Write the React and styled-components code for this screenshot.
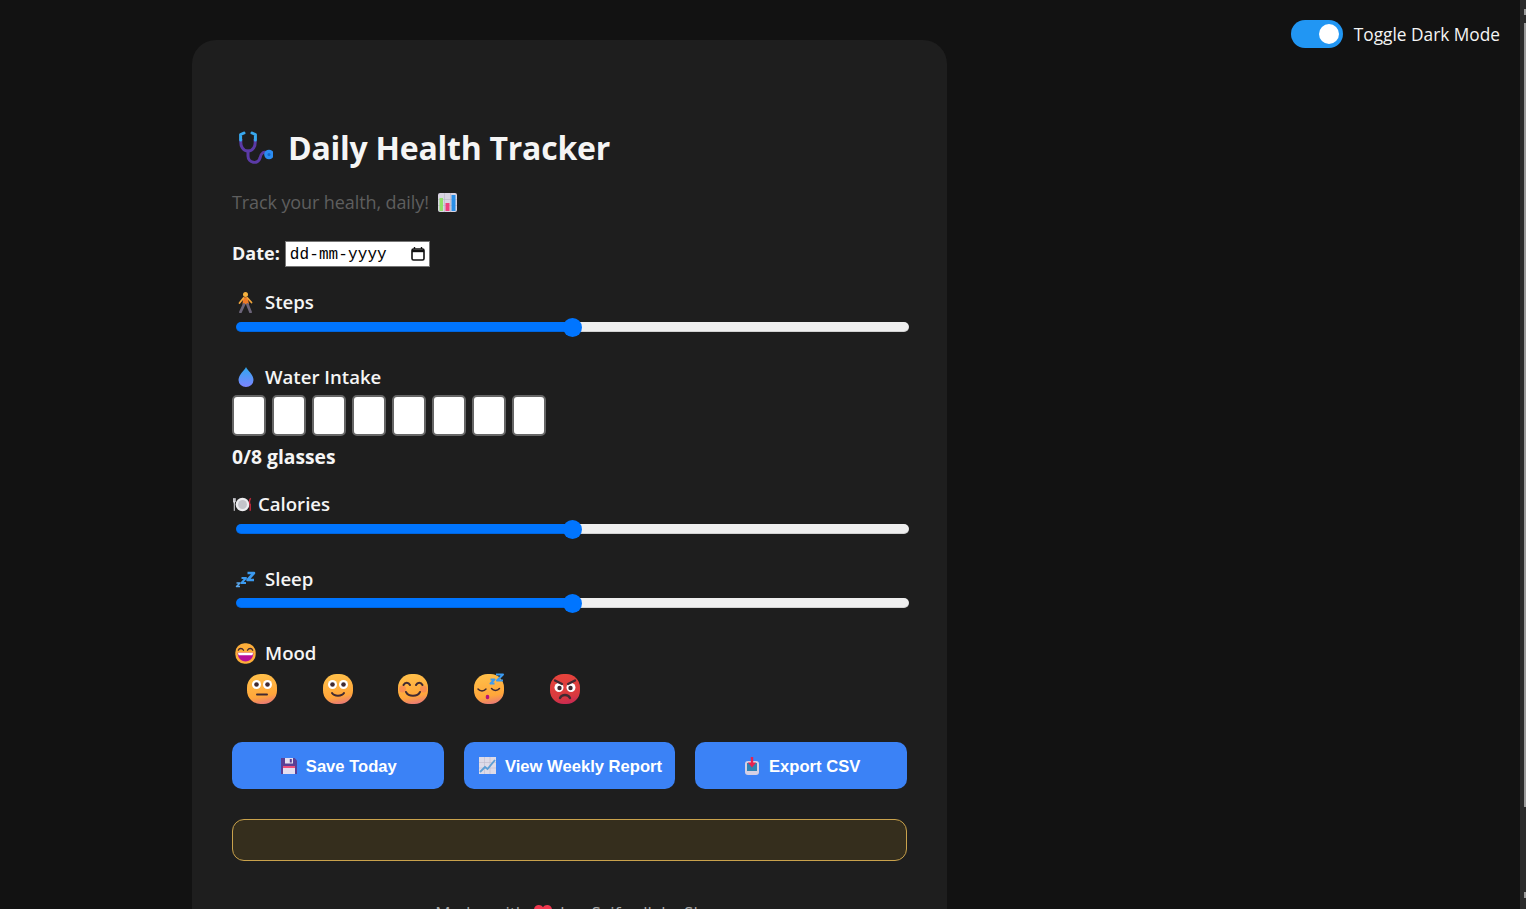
import { useId, useState } from "react";
import styled, { createGlobalStyle } from "styled-components";

const GlobalStyle = createGlobalStyle`
  html, body {
    margin: 0;
    height: 100%;
    overflow: hidden;
    background: #121212;
  }
  * {
    box-sizing: border-box;
  }
`;

const uiFont = `"Open Sans", "Noto Sans", sans-serif`;

// Emoji drawn by hand, the page has no colour emoji font to rely on
function Stethoscope() {
  return (
    <Glyph $w={36} $h={34} viewBox="5 6 36 34" fill="none">
      <path d="M9 15c-1 6 2 11 7 11s8-5 7-11" stroke="#5b3aa6" strokeWidth="3" strokeLinecap="round" />
      <path d="M16 26v5c0 7 10 9 12 2 1-5 4-7 7-5" stroke="#5b3aa6" strokeWidth="3" strokeLinecap="round" />
      <path d="M8.600 15V9.500L12 8M23.400 15V9.500L20 8" stroke="#38a8ee" strokeWidth="3" strokeLinecap="round" strokeLinejoin="round" />
      <circle cx="37" cy="29.500" r="4.800" fill="#2b8cf2" />
      <circle cx="37" cy="29.500" r="1.500" fill="#1566c8" />
    </Glyph>
  );
}

function BarChart() {
  return (
    <Glyph $w={19} $h={19} viewBox="0 0 19 19">
      <rect width="19" height="19" rx="2" fill="#d9d4e2" />
      <path d="M0 6.500h19M0 12.500h19M6.500 0v19M12.500 0v19" stroke="#b9b3c6" strokeWidth=".6" />
      <rect x="1.500" y="5" width="3.500" height="13" fill="#8fe06a" />
      <rect x="7.500" y="10" width="4" height="8" fill="#ee3f7f" />
      <rect x="13.500" y="2" width="4" height="16" fill="#2a8fe8" />
    </Glyph>
  );
}

function Walker() {
  return (
    <Glyph $w={20} $h={21} viewBox="0 0 20 21">
      <circle cx="10.500" cy="2.600" r="2.500" fill="#f5b13e" />
      <path d="M8 5.500l4.500-.5 1.500 7-6.500.5z" fill="#ef7a26" />
      <path d="M8.500 6L4.500 11M12.500 6l4 4.500" stroke="#f0a53c" strokeWidth="1.800" strokeLinecap="round" />
      <path d="M9 12.500l-3.500 7.500M12.500 12.500l3 7.500" stroke="#6b6478" strokeWidth="2.800" strokeLinecap="round" />
    </Glyph>
  );
}

function Droplet() {
  const id = useId();
  return (
    <Glyph $w={20} $h={20} viewBox="0 0 20 20">
      <defs>
        <linearGradient id={id} x1="0" y1="0" x2="0" y2="1">
          <stop offset="0" stopColor="#2fa8f0" />
          <stop offset="1" stopColor="#7d84ff" />
        </linearGradient>
      </defs>
      <path d="M10 0c1 3 7.500 7.500 7.500 13a7.500 7 0 0 1-15 0C2.500 7.500 9 3 10 0z" fill={`url(#${id})`} />
    </Glyph>
  );
}

function Plate() {
  return (
    <Glyph $w={19} $h={15} viewBox="0 0 18 14">
      <circle cx="9" cy="7" r="6.500" fill="#ececef" />
      <circle cx="9" cy="7" r="4.200" fill="#c4c4ca" />
      <path d="M1.200 1v5M.3 1v3.500h1.800V1M1.200 4.500V13" stroke="#e8e8ee" strokeWidth=".9" fill="none" />
      <path d="M16.800 1c-1.500 1.500-1.500 5-.5 6v6" stroke="#c9283c" strokeWidth="1.300" fill="none" />
    </Glyph>
  );
}

function Zzz() {
  return (
    <Glyph $w={21} $h={17} viewBox="0 0 20 17" fill="none" strokeLinejoin="round">
      <path d="M12 2h6.500l-6.500 7h6.500" stroke="#3b9af0" strokeWidth="2.600" />
      <path d="M6 7h4.500L6 12h4.500" stroke="#3b9af0" strokeWidth="2" />
      <path d="M1 12h3.500L1 15.500h3.500" stroke="#5aa8ee" strokeWidth="1.500" />
    </Glyph>
  );
}

// The round yellow base that the mood faces share
function FaceBase({ size, angry, children }) {
  const id = useId();
  const top = angry ? "#e8443c" : "#ffc04a";
  const mid = angry ? "#d93a3e" : "#ffa63a";
  const low = angry ? "#c92a52" : "#ea7c72";
  return (
    <Glyph $w={size} $h={size} viewBox="0 0 32 32">
      <defs>
        <linearGradient id={id} x1="0.300" y1="0" x2="0.500" y2="1">
          <stop offset="0" stopColor={top} />
          <stop offset="0.750" stopColor={mid} />
          <stop offset="1" stopColor={low} />
        </linearGradient>
      </defs>
      <rect x="1" y="1" width="30" height="30" rx="13.500" fill={`url(#${id})`} />
      {children}
    </Glyph>
  );
}

function Eyes() {
  return (
    <>
      <circle cx="10.500" cy="11.500" r="4.500" fill="#fff" />
      <circle cx="21.500" cy="11.500" r="4.500" fill="#fff" />
      <circle cx="10.500" cy="11.500" r="2.300" fill="#402a32" />
      <circle cx="21.500" cy="11.500" r="2.300" fill="#402a32" />
    </>
  );
}

const faceLine = { stroke: "#402a32", strokeWidth: 2, strokeLinecap: "round", fill: "none" };

function NeutralFace() {
  return (
    <FaceBase size={32}>
      <Eyes />
      <path d="M11 21.500h10" {...faceLine} />
    </FaceBase>
  );
}

function SmileFace() {
  return (
    <FaceBase size={32}>
      <Eyes />
      <path d="M10 20c2 3.500 10 3.500 12 0" {...faceLine} />
    </FaceBase>
  );
}

function HappyFace() {
  return (
    <FaceBase size={32}>
      <circle cx="5.500" cy="16" r="3.500" fill="#f2765e" opacity=".55" />
      <circle cx="26.500" cy="16" r="3.500" fill="#f2765e" opacity=".55" />
      <path d="M6.500 12c1.500-3 5-3 6.500 0M19 12c1.500-3 5-3 6.500 0" {...faceLine} />
      <path d="M9 19c2.500 5 11.500 5 14 0" {...faceLine} />
    </FaceBase>
  );
}

function SleepFace() {
  return (
    <FaceBase size={32}>
      <path d="M5 16c2 2.500 6 2.500 8 0M18.500 15.500c2 2.500 6 2.500 8 0" {...faceLine} strokeWidth="1.500" />
      <ellipse cx="14.500" cy="24" rx="1.800" ry="2.200" fill="#b80f7a" />
      <path d="M23 1.500h7l-6 6h6M17.500 6.500h4l-4 4h4" stroke="#3b9af0" strokeWidth="2" fill="none" strokeLinejoin="round" />
    </FaceBase>
  );
}

function AngryFace() {
  return (
    <FaceBase size={32} angry>
      <circle cx="10" cy="14.500" r="4.500" fill="#fff" />
      <circle cx="22" cy="14.500" r="4.500" fill="#fff" />
      <circle cx="10.500" cy="15" r="2.200" fill="#402a32" />
      <circle cx="21.500" cy="15" r="2.200" fill="#402a32" />
      <path d="M6 7.500l7 3.500M26 7.500l-7 3.500" {...faceLine} strokeWidth="2.400" />
      <path d="M11 25c2-4 8-4 10 0" {...faceLine} strokeWidth="2.400" />
    </FaceBase>
  );
}

function GrinFace() {
  return (
    <Glyph $w={21} $h={21} viewBox="0 0 32 32">
      <rect x=".5" y=".5" width="31" height="31" rx="14" fill="#fdae3a" />
      <path d="M5 11c1.500-3.500 6-3.500 8 0M19 11c2-3.500 6.500-3.500 8 0" stroke="#402a32" strokeWidth="2" fill="none" strokeLinecap="round" />
      <path d="M4 15h24c0 8-5 13-12 13S4 23 4 15z" fill="#b80f9a" />
      <path d="M4.500 15h23l-1 3.500h-21z" fill="#fff" />
    </Glyph>
  );
}

function Floppy() {
  return (
    <Glyph $w={16} $h={16} viewBox="0 0 16 16">
      <path d="M0 0h13.500L16 2.500V16H0z" fill="#5b3f95" />
      <rect x="4" y="0" width="8" height="5.500" fill="#e4dff0" />
      <rect x="8.800" y="1" width="2" height="3.500" fill="#5b3f95" />
      <rect x="2" y="8" width="12" height="8" fill="#e6def0" />
      <rect x="2" y="8" width="12" height="2" fill="#ee4f7c" />
    </Glyph>
  );
}

function ChartUp() {
  return (
    <Glyph $w={17} $h={17} viewBox="0 0 17 17">
      <rect width="17" height="17" fill="#dedbe8" />
      <path d="M0 5.500h17M0 11h17M5.500 0v17M11 0v17" stroke="#bfbccd" strokeWidth=".6" />
      <path d="M1 15l5-5 2.500 2L16 3" stroke="#5c9fd6" strokeWidth="1.800" fill="none" />
    </Glyph>
  );
}

function Outbox() {
  return (
    <Glyph $w={16} $h={18} viewBox="0 0 16 18">
      <rect x="1" y="4" width="14" height="14" rx="3" fill="#d5d0e4" />
      <rect x="3" y="6" width="10" height="8" fill="#2f85b5" />
      <path d="M8 0v7" stroke="#e8224f" strokeWidth="2.400" />
      <path d="M3.800 5.500h8.400L8 10.500z" fill="#e8224f" />
    </Glyph>
  );
}

function Heart() {
  return (
    <Glyph $w={18} $h={16} viewBox="0 0 18 16">
      <path d="M9 16C3 11.500 0 8.500 0 4.800 0 2 2.200 0 4.800 0 6.500 0 8.100.8 9 2.200 9.900.8 11.500 0 13.200 0 15.800 0 18 2 18 4.800c0 3.700-3 6.700-9 11.200z" fill="#f0384f" />
    </Glyph>
  );
}

const moods = [
  { name: "neutral", Icon: NeutralFace },
  { name: "okay", Icon: SmileFace },
  { name: "happy", Icon: HappyFace },
  { name: "tired", Icon: SleepFace },
  { name: "angry", Icon: AngryFace },
];

const actions = [
  { label: "Save Today", Icon: Floppy },
  { label: "View Weekly Report", Icon: ChartUp },
  { label: "Export CSV", Icon: Outbox },
];

export default function App() {
  const [steps, setSteps] = useState(50);
  const [calories, setCalories] = useState(50);
  const [sleep, setSleep] = useState(50);
  const [dark, setDark] = useState(true);

  return (
    <Frame>
      <GlobalStyle />
      <Viewport>
        <ThemeToggle>
          <ToggleInput
            type="checkbox"
            checked={dark}
            onChange={(e) => setDark(e.target.checked)}
          />
          <ToggleTrack $on={dark} />
          <ToggleText>Toggle Dark Mode</ToggleText>
        </ThemeToggle>

        <Card>
          <Title>
            <Stethoscope />
            Daily Health Tracker
          </Title>
          <Subtitle>
            Track your health, daily!
            <BarChart />
          </Subtitle>

          <DateRow>
            <DateLabel>Date:</DateLabel>
            <DateField>
              <DateText>dd-mm-yyyy</DateText>
              <Glyph $w={14} $h={14} viewBox="0 0 14 14" fill="none">
                <rect x="1" y="2" width="12" height="11" rx="1.500" stroke="#111" strokeWidth="1.600" />
                <path d="M1 4h12" stroke="#111" strokeWidth="2.400" />
                <path d="M3.500 0v2M10.500 0v2" stroke="#111" strokeWidth="1.400" />
              </Glyph>
            </DateField>
          </DateRow>

          <Field $top={22}>
            <FieldLabel $indent={3} $gap={10}>
              <Walker />
              Steps
            </FieldLabel>
            <Slider
              type="range"
              value={steps}
              $value={steps}
              onChange={(e) => setSteps(Number(e.target.value))}
            />
          </Field>

          <Field>
            <FieldLabel $indent={4} $gap={9}>
              <Droplet />
              Water Intake
            </FieldLabel>
            <Glasses>
              {Array.from({ length: 8 }, (_, i) => (
                <Glass key={i} type="button" aria-label={`Glass ${i + 1}`} />
              ))}
            </Glasses>
            <GlassCount>0/8 glasses</GlassCount>
          </Field>

          <Field $top={21}>
            <FieldLabel $indent={1} $gap={6}>
              <Plate />
              Calories
            </FieldLabel>
            <Slider
              type="range"
              value={calories}
              $value={calories}
              onChange={(e) => setCalories(Number(e.target.value))}
            />
          </Field>

          <Field>
            <FieldLabel $indent={3} $gap={9}>
              <Zzz />
              Sleep
            </FieldLabel>
            <Slider
              type="range"
              value={sleep}
              $value={sleep}
              $top={1}
              onChange={(e) => setSleep(Number(e.target.value))}
            />
          </Field>

          <Field>
            <FieldLabel $indent={3} $gap={9}>
              <GrinFace />
              Mood
            </FieldLabel>
            <MoodRow>
              {moods.map(({ name, Icon }) => (
                <MoodButton key={name} type="button" aria-label={name}>
                  <Icon />
                </MoodButton>
              ))}
            </MoodRow>
          </Field>

          <Actions>
            {actions.map(({ label, Icon }) => (
              <ActionButton key={label} type="button">
                <Icon />
                <ActionLabel>{label}</ActionLabel>
              </ActionButton>
            ))}
          </Actions>

          <StatusBox />

          <Footer>
            Made with <Heart /> by Saif ullah Sh
          </Footer>
        </Card>
      </Viewport>

      <ScrollTrack>
        <ScrollArrow />
        <ScrollThumb />
        <ScrollArrow $down />
      </ScrollTrack>
    </Frame>
  );
}

// Styled Components

const Glyph = styled.svg`
  display: block;
  flex: none;
  width: ${(p) => p.$w}px;
  height: ${(p) => p.$h}px;
`;

const Frame = styled.div`
  display: flex;
  height: 100vh;
  overflow: hidden;
  background: #121212;
  font-family: ${uiFont};
  color: #f5f5f5;
`;

const Viewport = styled.main`
  position: relative;
  flex: 1;
  min-width: 0;
  overflow: hidden;
`;

const ThemeToggle = styled.label`
  position: absolute;
  top: 20px;
  right: 20px;
  display: flex;
  align-items: center;
  gap: 11px;
  height: 28px;
  font-size: 17.3px;
  line-height: 28px;
  color: #f5f5f5;
`;

const ToggleText = styled.span`
  padding-top: 2px;
`;

const ToggleInput = styled.input`
  display: none;
`;

const ToggleTrack = styled.span`
  position: relative;
  width: 52px;
  height: 28px;
  border-radius: 14px;
  background: ${(p) => (p.$on ? "#2196f3" : "#666")};

  &::after {
    content: "";
    position: absolute;
    top: 4px;
    right: ${(p) => (p.$on ? "4px" : "28px")};
    width: 20px;
    height: 20px;
    border-radius: 50%;
    background: #fff;
  }
`;

const Card = styled.div`
  width: 755px;
  margin: 40px 0 0 192px;
  padding: 86px 40px 40px;
  border-radius: 24px;
  background: #1e1e1e;
`;

const Title = styled.h1`
  display: flex;
  align-items: center;
  gap: 15px;
  margin: 0 0 0 5px;
  font-size: 32px;
  line-height: 43px;
  font-weight: 700;
  letter-spacing: -0.25px;
  color: #f5f5f5;
`;

const Subtitle = styled.p`
  display: flex;
  align-items: center;
  gap: 9px;
  height: 24px;
  margin: 21px 0 0;
  font-size: 18px;
  line-height: 24px;
  letter-spacing: -0.1px;
  color: #5e5e5e;
`;

const DateRow = styled.div`
  display: flex;
  align-items: center;
  gap: 5px;
  height: 26px;
  margin-top: 27px;
`;

const DateLabel = styled.span`
  padding-bottom: 2px;
  font-size: 18px;
  font-weight: 700;
  line-height: 24px;
`;

const DateField = styled.div`
  display: flex;
  align-items: center;
  justify-content: space-between;
  width: 145px;
  height: 26px;
  padding: 0 4px;
  border: 1px solid #767676;
  background: #fff;
  color: #000;
`;

const DateText = styled.span`
  padding-top: 2px;
  font-family: "Liberation Mono", monospace;
  font-size: 16px;
  letter-spacing: 0.1px;
`;

const Field = styled.section`
  margin-top: ${(p) => p.$top ?? 27}px;
`;

const FieldLabel = styled.div`
  display: flex;
  align-items: center;
  gap: ${(p) => p.$gap}px;
  height: 26px;
  padding-left: ${(p) => p.$indent}px;
  font-size: 18.6px;
  font-weight: 600;
  line-height: 26px;
`;

const Slider = styled.input`
  display: block;
  width: 673px;
  height: 20px;
  margin: ${(p) => p.$top ?? 2}px 0 0 4px;
  background: transparent;
  appearance: none;
  -webkit-appearance: none;

  &::-webkit-slider-runnable-track {
    height: 10px;
    border-radius: 5px;
    background: linear-gradient(
      to right,
      #0075ff ${(p) => p.$value}%,
      #efefef ${(p) => p.$value}%
    );
    box-shadow: inset 0 -1px 0 rgba(0, 0, 0, 0.12);
  }

  &::-webkit-slider-thumb {
    -webkit-appearance: none;
    width: 19px;
    height: 19px;
    margin-top: -4.5px;
    border-radius: 50%;
    background: #0075ff;
  }
`;

const Glasses = styled.div`
  display: flex;
  gap: 6px;
  margin-top: 5px;
`;

const Glass = styled.button`
  width: 34px;
  height: 41px;
  padding: 0;
  border: 2px solid #666;
  border-radius: 5px;
  background: #fff;
`;

const GlassCount = styled.div`
  margin-top: 8px;
  font-size: 19.3px;
  font-weight: 700;
  line-height: 26px;
`;

const MoodRow = styled.div`
  display: flex;
  gap: 43.7px;
  margin-top: 7px;
  padding-left: 14px;
`;

const MoodButton = styled.button`
  padding: 0;
  border: 0;
  background: none;
`;

const Actions = styled.div`
  display: flex;
  gap: 20px;
  margin-top: 37px;
`;

const ActionButton = styled.button`
  flex: 1;
  display: flex;
  align-items: center;
  justify-content: center;
  gap: 9px;
  height: 47px;
  padding: 0 0 0 2px;
  border: 0;
  border-radius: 10px;
  background: #3b82f6;
  color: #fff;
  font-family: "Liberation Sans", Arial, sans-serif;
  font-size: 16.6px;
  font-weight: 700;
`;

const ActionLabel = styled.span`
  padding-top: 2px;
`;

const StatusBox = styled.div`
  height: 42px;
  margin-top: 30px;
  border: 1px solid #c9a24c;
  border-radius: 12px;
  background: #352e1d;
`;

const Footer = styled.footer`
  display: flex;
  align-items: center;
  justify-content: center;
  gap: 8px;
  margin-top: 41px;
  font-size: 17px;
  line-height: 22px;
  word-spacing: 8px;
  color: #aaa;
`;

const ScrollTrack = styled.aside`
  flex: none;
  display: flex;
  flex-direction: column;
  align-items: flex-end;
  width: 6px;
  padding: 9px 0 8px;
  background: #2b2b2b;
`;

const ScrollArrow = styled.span`
  width: 2px;
  height: 6px;
  flex: none;
  background: #9a9a9a;
  margin-top: ${(p) => (p.$down ? "85px" : "0")};
`;

const ScrollThumb = styled.span`
  width: 2px;
  height: 784px;
  margin-top: 8px;
  flex: none;
  background: #9a9a9a;
`;
